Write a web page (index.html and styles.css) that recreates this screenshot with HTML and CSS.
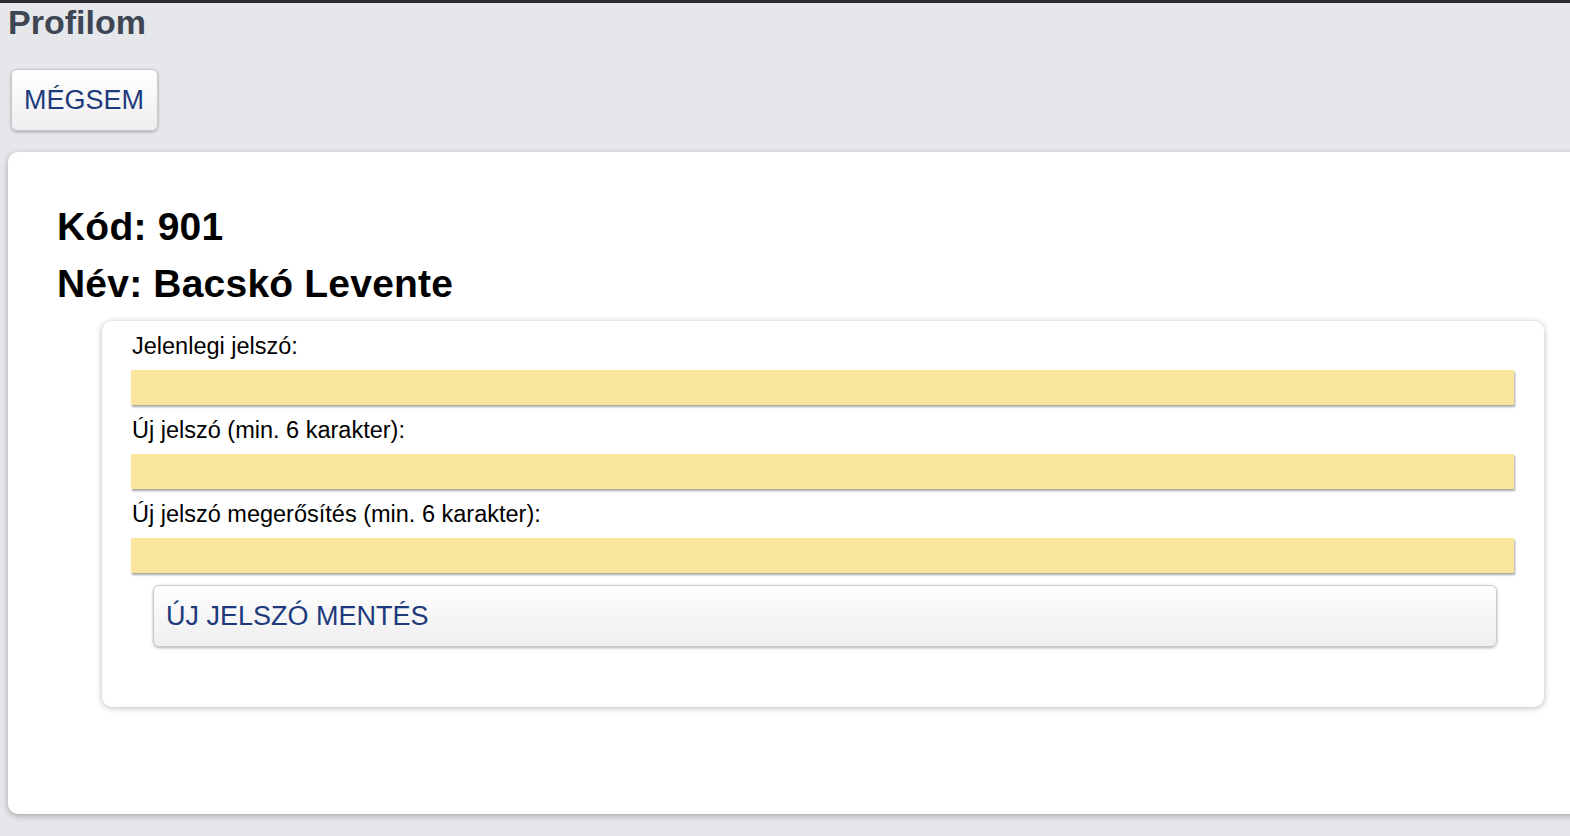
FILE: index.html
```html
<!DOCTYPE html>
<html lang="hu">

<head>
    <meta charset="UTF-8">
    <meta name="viewport" content="width=device-width, initial-scale=1.0">
    <title>Profilom</title>
    <link rel="stylesheet" href="styles.css">
</head>

<body>
    <header class="pageHeader">
        <h1 class="pageTitle">Profilom</h1>
        <button class="bttn bttnCancel" type="button">MÉGSEM</button>
    </header>
    <main class="card">
        <div class="userInfo">Kód: 901</div>
        <div class="userInfo">Név: Bacskó Levente</div>
        <form class="pwdPanel">
            <label class="pwdLabel" for="pwd-old">Jelenlegi jelszó:</label>
            <input class="pwdInput" id="pwd-old" type="password">
            <label class="pwdLabel" for="pwd-new">Új jelszó (min. 6 karakter):</label>
            <input class="pwdInput" id="pwd-new" type="password">
            <label class="pwdLabel" for="pwd-again">Új jelszó megerősítés (min. 6 karakter):</label>
            <input class="pwdInput" id="pwd-again" type="password">
            <button class="bttn bttnSave" type="button">ÚJ JELSZÓ MENTÉS</button>
        </form>
    </main>
</body>

</html>
```

FILE: styles.css
```css
html,
body {
    overflow: hidden;
}

body {
    margin: 0;
    padding: 0 0 0 8px;
    min-height: 833px;
    background-color: rgb(230, 231, 235);
    border-top: 3px solid rgb(43, 43, 43);
    font-family: "Liberation Sans", Arial, sans-serif;
}

.pageHeader {
    display: flex;
    flex-direction: column;
    align-items: flex-start;
}

.pageTitle {
    margin: 0;
    font-family: "Liberation Sans", Arial, sans-serif;
    font-size: 34px;
    line-height: 38px;
    font-weight: 700;
    color: rgb(62, 69, 83);
}

.bttn {
    font-family: "Liberation Sans", Arial, sans-serif;
    font-size: 27px;
    color: rgb(30, 58, 124);
    text-align: left;
    background: linear-gradient(rgb(255, 255, 255), rgb(238, 238, 240));
    border: 1px solid rgb(200, 200, 202);
    border-radius: 6px;
    box-shadow: 0 1px 3px rgba(0, 0, 0, 0.3);
    cursor: pointer;
}

.bttnCancel {
    margin: 28px 0 0 3px;
    width: 147px;
    height: 62px;
    padding: 0 12px;
}

.card {
    margin: 21px -22px 0 0;
    padding: 46px 48px 107px 49px;
    background-color: rgb(255, 255, 255);
    border-radius: 10px;
    box-shadow: 0 2px 6px rgba(0, 0, 0, 0.28);
}

.userInfo {
    font-size: 39px;
    line-height: 57px;
    font-weight: 700;
    letter-spacing: 0.2px;
    color: rgb(0, 0, 0);
}

.pwdPanel {
    display: flex;
    flex-direction: column;
    margin: 9px 0 0 45px;
    padding: 13px 30px 60px 29px;
    background-color: rgb(255, 255, 255);
    border-radius: 10px;
    box-shadow: 0 1px 6px rgba(0, 0, 0, 0.28);
}

.pwdLabel {
    font-size: 23.5px;
    line-height: 24px;
    color: rgb(0, 0, 0);
    padding-left: 1px;
}

.pwdInput {
    margin: 12px 0 13px 0;
    height: 35px;
    padding: 0;
    border: none;
    background-color: rgb(250, 229, 158);
    box-shadow: 1px 2px 2px rgba(0, 0, 0, 0.35);
}

.pwdInput:last-of-type {
    margin-bottom: 0;
}

.bttnSave {
    margin: 12px 17px 0 22px;
    height: 62px;
    padding: 0 12px;
}
```
